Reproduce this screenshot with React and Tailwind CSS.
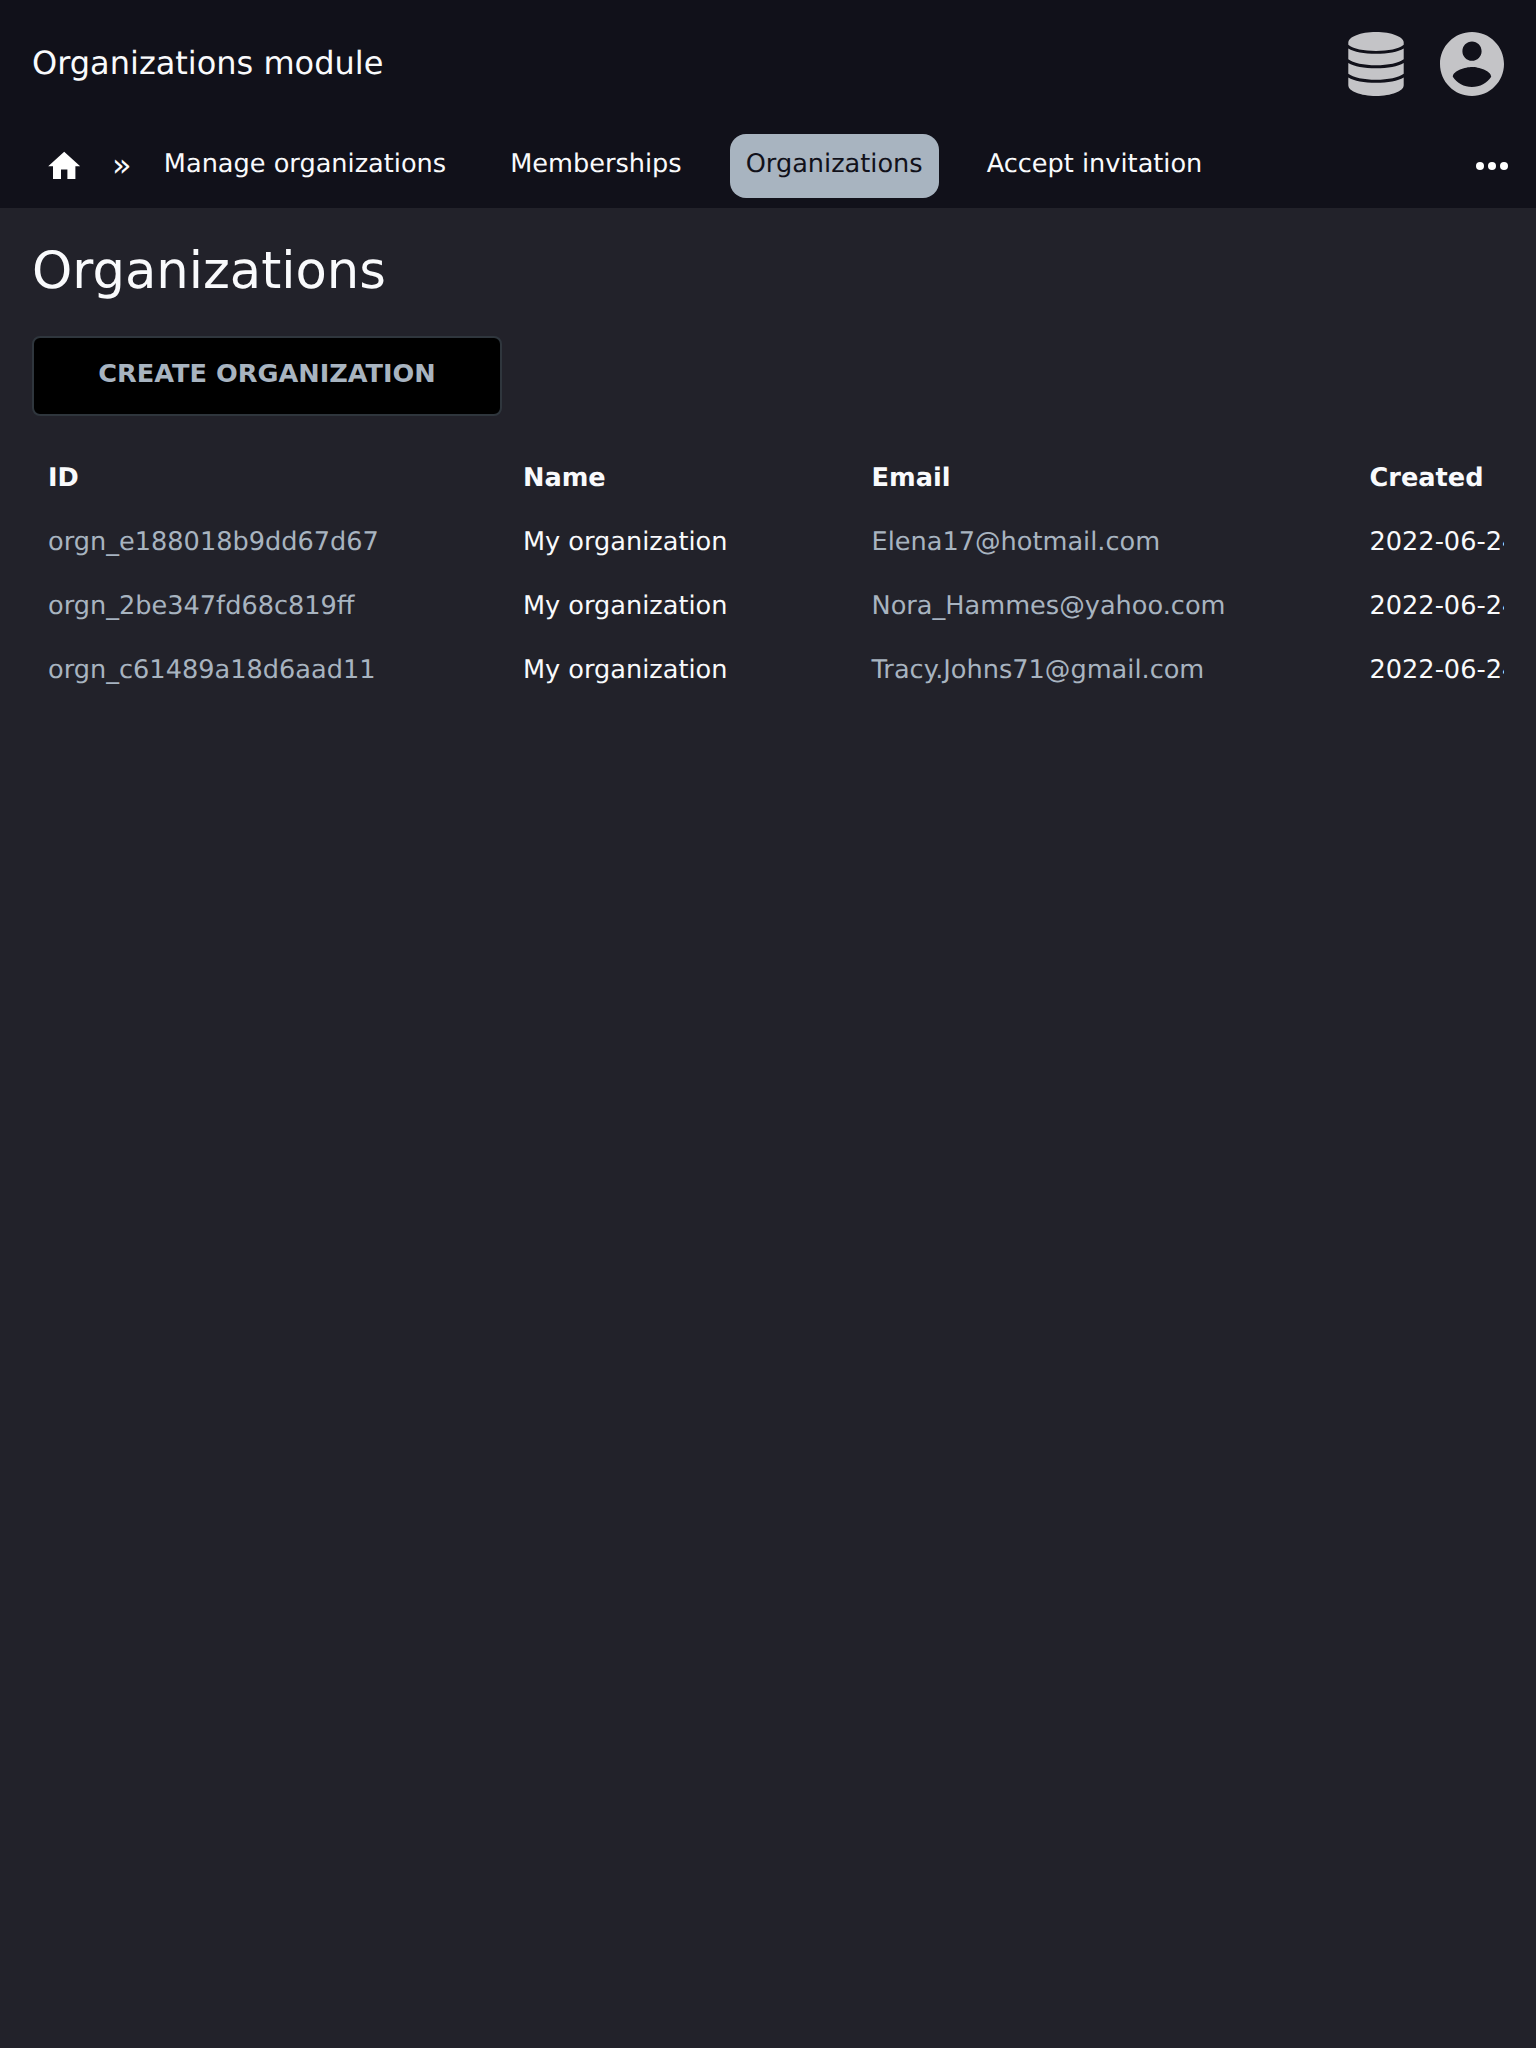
const rows = [
  ["orgn_e188018b9dd67d67", "My organization", "Elena17@hotmail.com", "2022-06-24"],
  ["orgn_2be347fd68c819ff", "My organization", "Nora_Hammes@yahoo.com", "2022-06-24"],
  ["orgn_c61489a18d6aad11", "My organization", "Tracy.Johns71@gmail.com", "2022-06-24"],
];

function DatabaseIcon() {
  return (
    <svg className="h-16 w-14" viewBox="0 0 56 64" fill="currentColor" aria-hidden="true">
      <path d="M28 0C43.500 0 55.700 4.800 55.700 10.700V12.800C51 17 40 19 28 19S5 17 0.300 12.800V10.700C0.300 4.800 12.500 0 28 0Z" />
      <path d="M0.300 16.500C6 20 16 21.800 28 21.800S50 20 55.700 16.500V27.200C51 31 40 33.200 28 33.200S5 31 0.300 27.200Z" />
      <path d="M0.300 31C6 34.500 16 36.300 28 36.300S50 34.500 55.700 31V41.700C51 45.500 40 47.700 28 47.700S5 45.500 0.300 41.700Z" />
      <path d="M0.300 45.400C6 48.900 16 50.700 28 50.700S50 48.900 55.700 45.400V53.300C55.700 59.200 43.500 64 28 64S0.300 59.200 0.300 53.300Z" />
    </svg>
  );
}

function AccountIcon() {
  return (
    <svg className="size-16" viewBox="2 2 20 20" fill="currentColor" aria-hidden="true">
      <path d="M12 2C6.48 2 2 6.48 2 12s4.480 10 10 10 10-4.480 10-10S17.520 2 12 2zm0 3c1.660 0 3 1.340 3 3s-1.340 3-3 3-3-1.340-3-3 1.340-3 3-3zm0 14.200c-2.500 0-4.710-1.280-6-3.220.03-1.990 4-3.080 6-3.080 1.990 0 5.970 1.090 6 3.080-1.290 1.940-3.500 3.220-6 3.220z" />
    </svg>
  );
}

function NavItem({ active, children }) {
  return (
    <a
      href="#"
      className={
        active
          ? "h-16 rounded-2xl bg-[#a8b4c0] px-4 leading-[60px] text-[#11111a]"
          : "h-16 rounded-2xl px-4 leading-[60px]"
      }
    >
      {children}
    </a>
  );
}

export default function App() {
  return (
    <div className="min-h-[2048px] bg-[#22222a] font-['DejaVu_Sans',sans-serif] text-[25.6px] text-[#f9fafc] [text-rendering:geometricPrecision]">
      <header className="h-52 bg-[#11111a]">
        <div className="flex h-32 items-center justify-between px-8">
          <div className="pb-0.5 text-[32px] leading-[48px]">Organizations module</div>
          <div className="flex gap-9 text-[#c4c4c7]">
            <DatabaseIcon />
            <AccountIcon />
          </div>
        </div>
        <nav className="flex h-20 items-start pt-1.5 pr-7 pl-[45px]">
          <svg className="mt-[13.2px] size-[38.4px] text-white" viewBox="0 0 24 24" fill="currentColor" aria-hidden="true">
            <path d="M10 20v-6h4v6h5v-8h3L12 3 2 12h3v8z" />
          </svg>
          <span className="ml-[28.6px] text-[32px] leading-[62px]">»</span>
          <div className="ml-[16.3px] flex gap-8">
            <NavItem>Manage organizations</NavItem>
            <NavItem>Memberships</NavItem>
            <NavItem active>Organizations</NavItem>
            <NavItem>Accept invitation</NavItem>
          </div>
          <svg className="mt-7 ml-auto h-2 w-8 text-white" viewBox="0 0 32 8" fill="currentColor" aria-hidden="true">
            <circle cx="4" cy="4" r="4" />
            <circle cx="16" cy="4" r="4" />
            <circle cx="28" cy="4" r="4" />
          </svg>
        </nav>
      </header>
      <main className="px-8 pt-8">
        <h1 className="h-24 text-[51.2px] leading-[62px]">Organizations</h1>
        <button className="flex h-20 w-[470px] justify-center rounded-lg border-2 border-[#2f363d] bg-black leading-[70px] font-bold text-[#a8b4c0]">
          CREATE ORGANIZATION
        </button>
        <div className="mt-8 overflow-hidden">
          <table className="w-[1600px] table-fixed border-collapse text-left whitespace-nowrap">
            <colgroup>
              <col className="w-[475px]" />
              <col className="w-[348.5px]" />
              <col className="w-[498px]" />
              <col />
            </colgroup>
            <thead>
              <tr className="h-16 leading-8">
                <th className="px-4 pb-1">ID</th>
                <th className="px-4 pb-1">Name</th>
                <th className="px-4 pb-1">Email</th>
                <th className="px-4 pb-1">Created</th>
              </tr>
            </thead>
            <tbody>
              {rows.map(([id, name, email, created]) => (
                <tr key={id} className="h-16 leading-8">
                  <td className="px-4 pb-1 text-[#a8b4c0]">{id}</td>
                  <td className="px-4 pb-1">{name}</td>
                  <td className="px-4 pb-1 text-[#a8b4c0]">{email}</td>
                  <td className="px-4 pb-1">{created}</td>
                </tr>
              ))}
            </tbody>
          </table>
        </div>
      </main>
    </div>
  );
}
